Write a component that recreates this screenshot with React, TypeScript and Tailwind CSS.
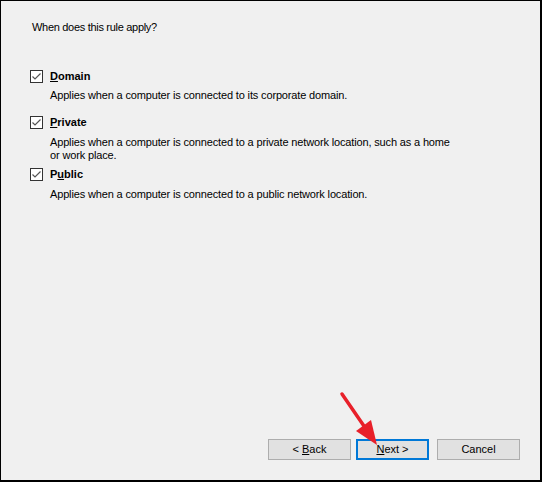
import React from "react";

const Check: React.FC = () => (
  <span className="flex h-[13px] w-[13px] shrink-0 items-center justify-center border border-[#333333] bg-white">
    <svg width="11" height="11" viewBox="0 0 11 11" fill="none">
      <path d="M1.5 5.5 L4 8 L9.5 2.5" stroke="#555555" strokeWidth="1.2" />
    </svg>
  </span>
);

const rules = [
  {
    key: "D",
    rest: "omain",
    pre: "",
    rowMt: "mt-[35px]",
    descMt: "mt-[6px]",
    desc: ["Applies when a computer is connected to its corporate domain."],
  },
  {
    key: "P",
    rest: "rivate",
    pre: "",
    rowMt: "mt-[14px]",
    descMt: "mt-[7px]",
    desc: [
      "Applies when a computer is connected to a private network location, such as a home",
      "or work place.",
    ],
  },
  {
    key: "u",
    rest: "blic",
    pre: "P",
    rowMt: "mt-[6px]",
    descMt: "mt-[7px]",
    desc: ["Applies when a computer is connected to a public network location."],
  },
];

const App: React.FC = () => {
  return (
    <div
      className="relative box-border flex h-[482px] w-[542px] flex-col border-t border-l border-r-2 border-b-2 border-black bg-[#f0f0f0] text-[11px] text-black"
      style={{ fontFamily: '"Liberation Sans", Arial, sans-serif' }}
    >
      <div className="flex flex-col pl-[29px] pt-[19px]">
        <p className="ml-[2px] leading-[15px] tracking-[-0.3px]">When does this rule apply?</p>

        {rules.map((r) => (
          <div key={r.key + r.rest} className="flex flex-col">
            <div className={`flex items-start gap-[7px] ${r.rowMt}`}>
              <Check />
              <span className="font-bold leading-[13px]">
                {r.pre}
                <span className="underline underline-offset-[1px]">{r.key}</span>
                {r.rest}
              </span>
            </div>
            <div className={`ml-[20px] leading-[13px] tracking-[-0.15px] ${r.descMt}`}>
              {r.desc.map((line) => (
                <div key={line}>{line}</div>
              ))}
            </div>
          </div>
        ))}
      </div>

      {/* Wizard buttons */}
      <div className="mt-auto flex justify-end pb-[20px] pr-[20px]">
        <button className="flex h-[21px] w-[83px] items-center justify-center border border-[#adadad] bg-[#e1e1e1]">
          &lt; <span className="ml-[3px] underline">B</span>ack
        </button>
        <button className="ml-[5px] flex h-[21px] w-[73px] items-center justify-center border-2 border-[#0078d7] bg-[#e1e1e1]">
          <span className="underline">N</span>ext &gt;
        </button>
        <button className="ml-[8px] flex h-[21px] w-[83px] items-center justify-center border border-[#adadad] bg-[#e1e1e1]">
          Cancel
        </button>
      </div>

      {/* Red annotation arrow */}
      <svg
        className="pointer-events-none absolute left-[-1px] top-[-1px]"
        width="542"
        height="482"
        viewBox="0 0 542 482"
      >
        <line x1="342" y1="394" x2="366" y2="429" stroke="#e8202a" strokeWidth="3.5" strokeLinecap="round" />
        <polygon points="377,445 356,431 371,420" fill="#e8202a" />
      </svg>
    </div>
  );
};

export default App;
